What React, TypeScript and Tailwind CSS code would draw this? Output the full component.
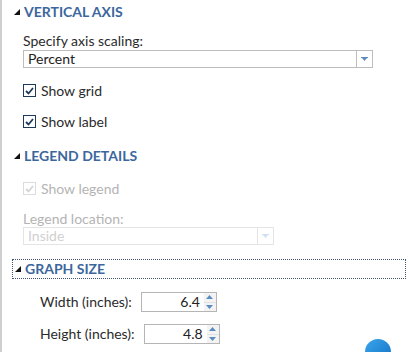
import { ReactNode } from 'react';

const font = { fontFamily: 'Lato, "Open Sans", sans-serif' };

function SectionHeader({ children, focused }: { children: ReactNode; focused?: boolean }) {
  return (
    <div
      className={
        'flex items-center gap-[4px] ' +
        (focused
          ? 'h-[20px] ml-[10px] w-[394px] pl-[2px] border border-dotted border-[#3d5470]'
          : 'h-[24px] pl-[12px]')
      }
    >
      <svg width="6" height="6" viewBox="0 0 6 6" className="shrink-0">
        <polygon points="0,6 6,0 6,6" fill="#111" />
      </svg>
      <span className="text-[14px] font-bold text-[#3c679d] leading-none">{children}</span>
    </div>
  );
}

function Check({ label, disabled, className }: { label: string; disabled?: boolean; className?: string }) {
  return (
    <div className={'flex items-center gap-[5px] ml-[21px] h-[13px] ' + (className ?? '')}>
      <div
        className={
          'w-[13px] h-[13px] flex items-center justify-center border ' +
          (disabled ? 'border-[#dcdcdc] bg-white' : 'border-[#1e3a5a] bg-white border-[1.5px]')
        }
      >
        <svg width="9" height="8" viewBox="0 0 9 8">
          <polyline
            points="1,4 3.5,6.5 8,1"
            fill="none"
            stroke={disabled ? '#d4d4d4' : '#1e3a5a'}
            strokeWidth="1.8"
          />
        </svg>
      </div>
      <span className={'text-[14px] leading-none ' + (disabled ? 'text-[#b4b4b4]' : 'text-[#2b2b2b]')}>{label}</span>
    </div>
  );
}

function Select({ value, disabled, width }: { value: string; disabled?: boolean; width: string }) {
  return (
    <div
      className={
        'flex h-[18px] ml-[21px] border ' +
        width +
        (disabled ? ' border-[#e4e4e4]' : ' border-[#bdbdbd]')
      }
    >
      <div
        className={
          'flex-1 flex items-center pl-[4px] text-[14px] leading-none ' +
          (disabled ? 'text-[#d0d0d0]' : 'text-[#222]')
        }
      >
        {value}
      </div>
      <div
        className={
          'w-[16px] flex items-center justify-center border-l ' +
          (disabled ? 'border-[#e4e4e4]' : 'border-[#bdbdbd]')
        }
      >
        <svg width="7" height="4" viewBox="0 0 7 4">
          <rect x="0" y="0" width="7" height="1" fill={disabled ? '#cfe0f0' : '#5a8cc2'} />
          <polygon points="1,1 6,1 3.5,4" fill={disabled ? '#cfe0f0' : '#5a8cc2'} />
        </svg>
      </div>
    </div>
  );
}

function Spinner({ label, value, className }: { label: string; value: string; className?: string }) {
  return (
    <div className={'flex items-center h-[20px] ml-[38px] ' + (className ?? '')}>
      <span className="text-[14px] text-[#2b2b2b] leading-none mr-[9px]">{label}</span>
      <div className="flex w-[76px] h-[20px] border border-[#b5b5b5]">
        <div className="flex-1 flex items-center justify-end pr-[4px] text-[14px] text-[#222] leading-none">
          {value}
        </div>
        <div className="w-[12px] flex flex-col bg-[#f3f3f3]">
          <div className="flex-1 flex items-center justify-center border-b border-[#e2e2e2]">
            <svg width="7" height="4" viewBox="0 0 7 4">
              <polygon points="0,4 7,4 3.5,0" fill="#5a8cc2" />
            </svg>
          </div>
          <div className="flex-1 flex items-center justify-center">
            <svg width="7" height="4" viewBox="0 0 7 4">
              <polygon points="0,0 7,0 3.5,4" fill="#5a8cc2" />
            </svg>
          </div>
        </div>
      </div>
    </div>
  );
}

export default function App() {
  return (
    <div className="w-[410px] h-[352px] bg-white flex overflow-hidden relative" style={font}>
      <div className="w-[2px] h-full bg-[#cfcfcf] shrink-0" />
      <div className="flex-1 flex flex-col">
        <SectionHeader>VERTICAL AXIS</SectionHeader>
        <div className="ml-[21px] mt-[8px] h-[18px] flex items-center text-[14px] text-[#2b2b2b] leading-none">
          Specify axis scaling:
        </div>
        <Select value="Percent" width="w-[350px]" />
        <Check label="Show grid" className="mt-[16px]" />
        <Check label="Show label" className="mt-[18px]" />

        <div className="mt-[16px]">
          <SectionHeader>LEGEND DETAILS</SectionHeader>
        </div>
        <Check label="Show legend" disabled className="mt-[14px]" />
        <div className="ml-[21px] mt-[15px] h-[17px] flex items-center text-[14px] text-[#b4b4b4] leading-none">
          Legend location:
        </div>
        <Select value="Inside" disabled width="w-[251px]" />

        <div className="mt-[14px]">
          <SectionHeader focused>GRAPH SIZE</SectionHeader>
        </div>
        <Spinner label="Width (inches):" value="6.4" className="mt-[13px]" />
        <Spinner label="Height (inches):" value="4.8" className="mt-[12px]" />
      </div>
      <div className="absolute left-[365px] top-[339px] w-[26px] h-[26px] rounded-full bg-gradient-to-br from-[#3aa6ec] to-[#0f6fc4]" />
    </div>
  );
}
